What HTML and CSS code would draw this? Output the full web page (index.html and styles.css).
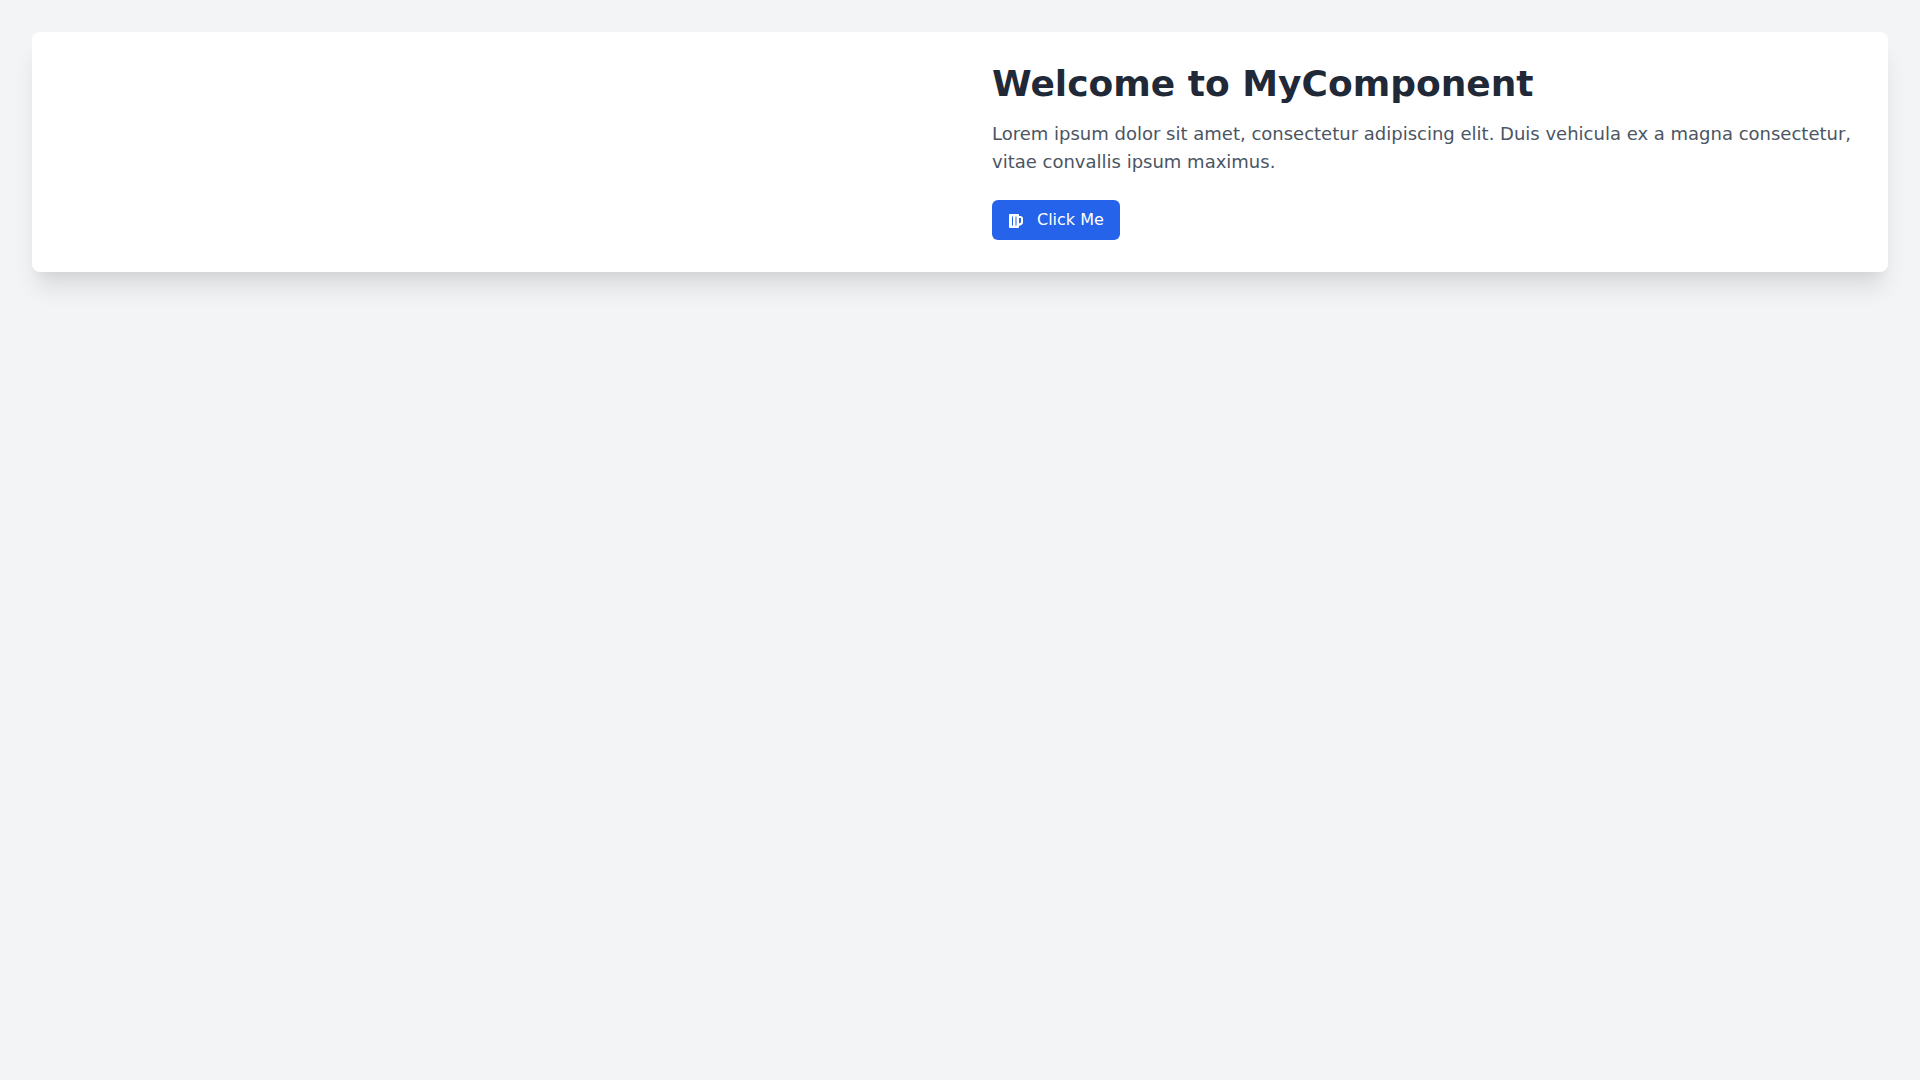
FILE: index.html
```html
<!DOCTYPE html>
<html lang="en">
<head>
  <meta charset="UTF-8" />
  <title>MyComponent</title>
  <link rel="stylesheet" href="styles.css">
</head>
<body>

  <div class="card">
    <div class="card-media"></div>
    <div class="card-body">
      <h1>Welcome to MyComponent</h1>
      <p>Lorem ipsum dolor sit amet, consectetur adipiscing elit. Duis vehicula ex a magna consectetur, vitae convallis ipsum maximus.</p>
      <button class="btn">
        <svg class="btn-icon" viewBox="0 0 448 512" fill="currentColor"><path d="M368 96h-48V56c0-13.300-10.700-24-24-24H24C10.700 32 0 42.700 0 56v400c0 13.300 10.700 24 24 24h272c13.300 0 24-10.700 24-24v-42.100l74.400-33.200C423 368 448 336 448 304V176c0-44.100-35.900-80-80-80zM128 392c0 8.800-7.200 16-16 16s-16-7.200-16-16V120c0-8.800 7.200-16 16-16s16 7.200 16 16v272zm112 0c0 8.800-7.200 16-16 16s-16-7.200-16-16V120c0-8.800 7.200-16 16-16s16 7.200 16 16v272zm144-88l-64 29V160h48c8.800 0 16 7.200 16 16v128z"/></svg>
        Click Me
      </button>
    </div>
  </div>

</body>
</html>
```

FILE: styles.css
```css
body {
  margin: 0;
  min-height: 1080px;
  padding: 32px;
  box-sizing: border-box;
  background: #f3f4f6;
  font-family: "DejaVu Sans", sans-serif;
}

.card {
  display: flex;
  background: #fff;
  border-radius: 8px;
  box-shadow: 0 20px 25px -5px rgba(0, 0, 0, 0.1), 0 10px 10px -5px rgba(0, 0, 0, 0.04);
}

.card-media {
  width: 50%;
}

.card-body {
  width: 50%;
  padding: 32px;
  box-sizing: border-box;
}

h1 {
  margin: 0 0 16px;
  font-size: 36px;
  line-height: 40px;
  font-weight: 700;
  color: #1f2937;
}

p {
  margin: 0 0 24px;
  font-size: 18px;
  line-height: 28px;
  color: #4b5563;
}

.btn {
  display: inline-flex;
  align-items: center;
  padding: 8px 16px;
  background: #2563eb;
  color: #fff;
  border: none;
  border-radius: 6px;
  font-family: inherit;
  font-size: 16px;
  line-height: 24px;
}

.btn-icon {
  width: 14px;
  height: 16px;
  margin: 2px 14px 0 1px;
}
```
